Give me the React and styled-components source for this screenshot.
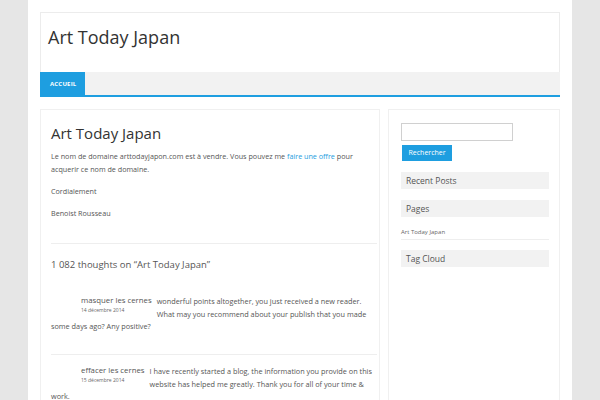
import React from "react";
import styled, { createGlobalStyle } from "styled-components";

const Global = createGlobalStyle`
  html, body {
    margin: 0;
    padding: 0;
    background: #e6e6e6;
    font-family: "Open Sans", "DejaVu Sans", sans-serif;
    color: #555;
  }
`;

const Page = styled.div`
  margin: 0 28px;
  background: #fff;
  padding: 12px 12px 0;
  height: 388px;
  overflow: hidden;
`;

const Header = styled.header`
  border: 1px solid #ececec;
  border-bottom: none;
`;

const SiteTitle = styled.h1`
  margin: 0;
  height: 59px;
  padding: 11px 0 0 7px;
  box-sizing: border-box;
  font-size: 18px;
  font-weight: 400;
  color: #333;
  line-height: 26px;
`;

const Nav = styled.nav`
  display: flex;
  height: 23px;
  background: #f2f2f2;
  border-bottom: 2px solid #1e9ee0;
  margin: 0 -1px;
`;

const NavItem = styled.a`
  display: flex;
  align-items: center;
  padding: 0 9px 0 10px;
  background: ${(p) => (p.$active ? "#1e9ee0" : "transparent")};
  color: ${(p) => (p.$active ? "#fff" : "#333")};
  font-size: 6px;
  font-weight: 700;
  letter-spacing: 0.2px;
  text-transform: uppercase;
`;

const Main = styled.div`
  display: flex;
  gap: 8px;
  margin-top: 12px;
  align-items: flex-start;
`;

const Content = styled.article`
  width: 340px;
  box-sizing: border-box;
  border: 1px solid #f0f0f0;
  padding: 12px 2px 0 10px;
  height: 300px;
`;

const PostTitle = styled.h2`
  margin: 0 0 6px;
  font-size: 15px;
  font-weight: 400;
  color: #333;
  line-height: 22px;
`;

const Para = styled.p`
  margin: 0 0 9px;
  font-size: 7.2px;
  line-height: 13px;
  color: #555;
`;

const Link = styled.a`
  color: #1e9ee0;
  text-decoration: none;
`;

const Divider = styled.hr`
  border: none;
  border-top: 1px solid #eee;
  margin: ${(p) => p.$m || "23px 0 0"};
`;

const CommentsTitle = styled.h3`
  margin: 14px 0 0;
  font-size: 9.5px;
  font-weight: 400;
  color: #555;
  line-height: 14px;
`;

const Comment = styled.div`
  padding-top: ${(p) => p.$top || "23px"};
  font-size: 7.3px;
  line-height: 12.5px;
  color: #555;
  min-height: 40px;
`;

const Author = styled.div`
  float: left;
  padding-left: 30px;
  margin-right: 5px;
`;

const AuthorName = styled.div`
  font-size: 7.8px;
  line-height: 10px;
  color: #555;
`;

const CommentDate = styled.div`
  margin-top: 2px;
  font-size: 5px;
  line-height: 7px;
  color: #666;
`;

const Sidebar = styled.aside`
  width: 172px;
  box-sizing: border-box;
  border: 1px solid #f0f0f0;
  padding: 13px 10px 0 12px;
  height: 300px;
`;

const SearchInput = styled.div`
  width: 112px;
  height: 18px;
  box-sizing: border-box;
  border: 1px solid #d0d0d0;
`;

const SearchButton = styled.div`
  width: fit-content;
  margin: 4px 0 0 1px;
  padding: 0 6.5px;
  height: 16px;
  line-height: 16px;
  background: #1e9ee0;
  color: #fff;
  font-size: 7px;
`;

const WidgetTitle = styled.div`
  margin-top: ${(p) => p.$mt || "11px"};
  height: 17px;
  line-height: 17px;
  background: #f2f2f2;
  padding-left: 5px;
  font-size: 8.5px;
  color: #555;
`;

const WidgetLink = styled.div`
  margin-top: 10px;
  padding-bottom: 2px;
  border-bottom: 1px solid #eee;
  font-size: 6px;
  line-height: 10px;
  color: #666;
`;

export default function App() {
  return (
    <>
      <Global />
      <Page>
        <Header>
          <SiteTitle>Art Today Japan</SiteTitle>
          <Nav>
            <NavItem $active>Accueil</NavItem>
          </Nav>
        </Header>
        <Main>
          <Content>
            <PostTitle>Art Today Japan</PostTitle>
            <Para>
              Le nom de domaine arttodayjapon.com est à vendre. Vous pouvez me{" "}
              <Link>faire une offre</Link> pour acquerir ce nom de domaine.
            </Para>
            <Para>Cordialement</Para>
            <Para>Benoist Rousseau</Para>
            <Divider />
            <CommentsTitle>1 082 thoughts on “Art Today Japan”</CommentsTitle>
            <Comment>
              <Author>
                <AuthorName>masquer les cernes</AuthorName>
                <CommentDate>14 décembre 2014</CommentDate>
              </Author>
              wonderful points altogether, you just received a new reader. What
              may you recommend about your publish that you made some days ago?
              Any positive?
            </Comment>
            <Divider $m="19px 0 0" />
            <Comment $top="10px">
              <Author>
                <AuthorName>effacer les cernes</AuthorName>
                <CommentDate>15 décembre 2014</CommentDate>
              </Author>
              I have recently started a blog, the information you provide on this
              website has helped me greatly. Thank you for all of your time &amp;
              work.
            </Comment>
          </Content>
          <Sidebar>
            <SearchInput />
            <SearchButton>Rechercher</SearchButton>
            <WidgetTitle>Recent Posts</WidgetTitle>
            <WidgetTitle>Pages</WidgetTitle>
            <WidgetLink>Art Today Japan</WidgetLink>
            <WidgetTitle $mt="10px">Tag Cloud</WidgetTitle>
          </Sidebar>
        </Main>
      </Page>
    </>
  );
}
